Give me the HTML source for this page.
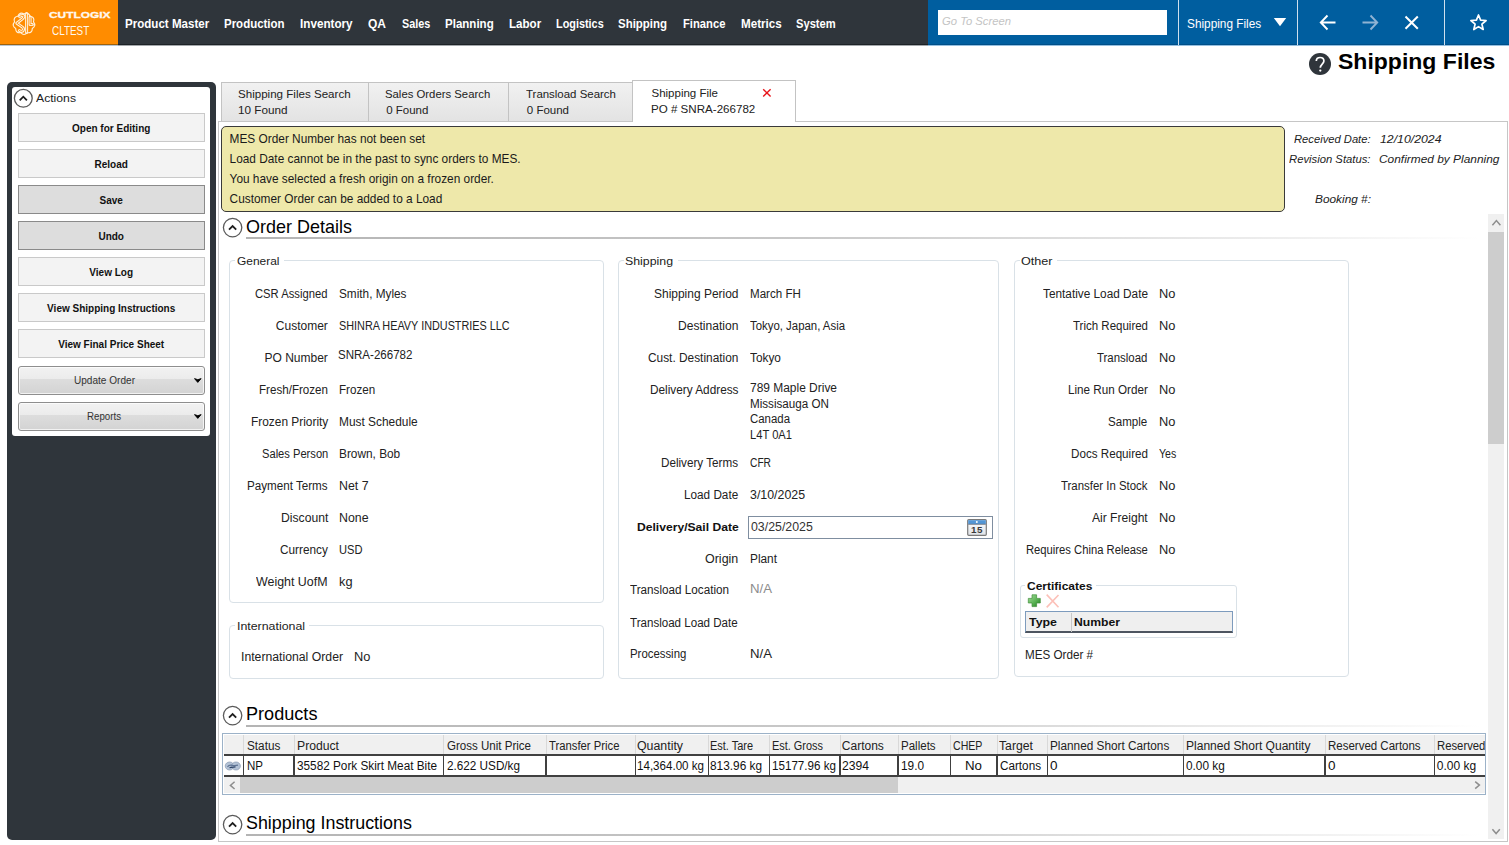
<!DOCTYPE html>
<html><head><meta charset="utf-8"><style>
html,body{margin:0;padding:0;width:1509px;height:845px;overflow:hidden;background:#fff;font-family:"Liberation Sans",sans-serif;}
body>div,body>svg{position:absolute;}
</style></head><body>
<div style="left:0px;top:0px;width:118px;height:45px;background:#ff8c00"></div>
<div style="left:0px;top:44px;width:118px;height:1px;background:#a0620c"></div>
<div style="left:0px;top:45px;width:118px;height:1px;background:#b9c6d4"></div>
<div style="left:118px;top:45px;width:810px;height:1px;background:#a4a8ac"></div>
<div style="left:928px;top:45px;width:581px;height:1px;background:#94bfe0"></div>
<div style="left:118px;top:0px;width:810px;height:45px;background:#2f353b"></div>
<div style="left:118px;top:44px;width:810px;height:1px;background:#1d2226"></div>
<div style="left:928px;top:0px;width:581px;height:45px;background:#005e9f"></div>
<div style="left:928px;top:44px;width:581px;height:1px;background:#004f88"></div>
<svg style="left:12px;top:11.5px" width="24" height="24" viewBox="0 0 24 24" fill="none" stroke="#fff1dc" stroke-width="1.15" stroke-linejoin="round" stroke-linecap="round">
<path d="M12.00 2.00 Q16.38 -0.43 18.17 4.25 Q23.09 5.20 21.45 9.93 Q24.61 13.82 20.31 16.40 Q20.23 21.41 15.28 20.62 Q12.00 24.40 8.72 20.62 Q3.77 21.41 3.69 16.40 Q-0.61 13.82 2.55 9.93 Q0.91 5.20 5.83 4.25 Q7.62 -0.43 12.00 2.00 Z"/>
<g stroke-width="3"><path d="M7.6 4.6 Q9.5 2.4 11.6 3.6 Q12.4 5 11 6.4 L4.8 11.2 L11 15.6 Q12.2 17.5 10.6 19.2 Q9 19.9 7.4 18.6"/><path d="M14.6 1.6 L14.6 20.6"/><path d="M18.1 5 L18.1 12.6 L20.4 12.6"/></g>
<g stroke="#ff8c00" stroke-width="0.9"><path d="M7.6 4.6 Q9.5 2.4 11.6 3.6 Q12.4 5 11 6.4 L4.8 11.2 L11 15.6 Q12.2 17.5 10.6 19.2 Q9 19.9 7.4 18.6"/><path d="M14.6 2.2 L14.6 20"/><path d="M18.1 5.6 L18.1 12.6 L20 12.6"/></g>
</svg>
<div style="left:48.50px;top:9.97px;font-size:8.8px;line-height:10.56px;font-weight:bold;font-style:normal;color:#fff8ee;white-space:nowrap;transform:scaleX(1.3505);transform-origin:0 0;-webkit-text-stroke:0.3px #fff8ee;">CUTLOGIX</div>
<div style="left:51.70px;top:24.36px;font-size:12.3px;line-height:14.76px;font-weight:normal;font-style:normal;color:#fff8ee;white-space:nowrap;transform:scaleX(0.8044);transform-origin:0 0;">CLTEST</div>
<div style="left:124.80px;top:16.87px;font-size:12.6px;line-height:15.12px;font-weight:bold;font-style:normal;color:#ffffff;white-space:nowrap;transform:scaleX(0.9181);transform-origin:0 0;">Product Master</div>
<div style="left:224.40px;top:16.87px;font-size:12.6px;line-height:15.12px;font-weight:bold;font-style:normal;color:#ffffff;white-space:nowrap;transform:scaleX(0.9114);transform-origin:0 0;">Production</div>
<div style="left:300.40px;top:16.87px;font-size:12.6px;line-height:15.12px;font-weight:bold;font-style:normal;color:#ffffff;white-space:nowrap;transform:scaleX(0.9276);transform-origin:0 0;">Inventory</div>
<div style="left:368.40px;top:16.87px;font-size:12.6px;line-height:15.12px;font-weight:bold;font-style:normal;color:#ffffff;white-space:nowrap;transform:scaleX(0.9524);transform-origin:0 0;">QA</div>
<div style="left:401.70px;top:16.87px;font-size:12.6px;line-height:15.12px;font-weight:bold;font-style:normal;color:#ffffff;white-space:nowrap;transform:scaleX(0.8595);transform-origin:0 0;">Sales</div>
<div style="left:444.90px;top:16.87px;font-size:12.6px;line-height:15.12px;font-weight:bold;font-style:normal;color:#ffffff;white-space:nowrap;transform:scaleX(0.9155);transform-origin:0 0;">Planning</div>
<div style="left:508.50px;top:16.87px;font-size:12.6px;line-height:15.12px;font-weight:bold;font-style:normal;color:#ffffff;white-space:nowrap;transform:scaleX(0.9200);transform-origin:0 0;">Labor</div>
<div style="left:555.60px;top:16.87px;font-size:12.6px;line-height:15.12px;font-weight:bold;font-style:normal;color:#ffffff;white-space:nowrap;transform:scaleX(0.8625);transform-origin:0 0;">Logistics</div>
<div style="left:618.20px;top:16.87px;font-size:12.6px;line-height:15.12px;font-weight:bold;font-style:normal;color:#ffffff;white-space:nowrap;transform:scaleX(0.9093);transform-origin:0 0;">Shipping</div>
<div style="left:682.80px;top:16.87px;font-size:12.6px;line-height:15.12px;font-weight:bold;font-style:normal;color:#ffffff;white-space:nowrap;transform:scaleX(0.8906);transform-origin:0 0;">Finance</div>
<div style="left:740.50px;top:16.87px;font-size:12.6px;line-height:15.12px;font-weight:bold;font-style:normal;color:#ffffff;white-space:nowrap;transform:scaleX(0.9226);transform-origin:0 0;">Metrics</div>
<div style="left:796.20px;top:16.87px;font-size:12.6px;line-height:15.12px;font-weight:bold;font-style:normal;color:#ffffff;white-space:nowrap;transform:scaleX(0.8857);transform-origin:0 0;">System</div>
<div style="left:938.4px;top:9.6px;width:228.6px;height:25.5px;background:#fff"></div>
<div style="left:942.20px;top:15.22px;font-size:11.5px;line-height:13.8px;font-weight:normal;font-style:italic;color:#c4c4c4;white-space:nowrap;transform:scaleX(0.9783);transform-origin:0 0;">Go To Screen</div>
<div style="left:1178px;top:0px;width:1.2px;height:45px;background:#cfe0ee"></div>
<div style="left:1297px;top:0px;width:1.2px;height:45px;background:#cfe0ee"></div>
<div style="left:1444.2px;top:0px;width:1.2px;height:45px;background:#cfe0ee"></div>
<div style="left:1186.80px;top:16.54px;font-size:12px;line-height:14.4px;font-weight:normal;font-style:normal;color:#ffffff;white-space:nowrap;transform:scaleX(0.9845);transform-origin:0 0;">Shipping Files</div>
<svg style="left:1273px;top:17px" width="14" height="10"><path d="M0.8 1 L13.2 1 L7 9.2 Z" fill="#fff"/></svg>
<svg style="left:1318px;top:13px" width="20" height="20" fill="none" stroke="#fff" stroke-width="1.9"><path d="M3 9.5 L17.5 9.5 M9.5 2.5 L2.8 9.5 L9.5 16.5"/></svg>
<svg style="left:1360px;top:13px" width="20" height="20" fill="none" stroke="#8fb3d3" stroke-width="1.9"><path d="M2.5 9.5 L17 9.5 M10.5 2.5 L17.2 9.5 L10.5 16.5"/></svg>
<svg style="left:1403px;top:14px" width="18" height="18" fill="none" stroke="#fff" stroke-width="2"><path d="M2.5 2.5 L14.8 14.8 M14.8 2.5 L2.5 14.8"/></svg>
<svg style="left:1468px;top:12px" width="21" height="21" fill="none" stroke="#fff" stroke-width="1.7"><path d="M10.5 3 L12.6 8.1 L18.1 8.5 L13.9 12.1 L15.2 17.5 L10.5 14.6 L5.8 17.5 L7.1 12.1 L2.9 8.5 L8.4 8.1 Z" stroke-linejoin="round"/></svg>
<div style="left:1308.6px;top:53.3px;width:22.2px;height:22.2px;border-radius:50%;background:#2f353b"></div>
<svg style="left:1308.6px;top:53.3px" width="22.2" height="22.2" fill="none" stroke="#fff" stroke-width="1.7"><path d="M7.3 8 C7.3 5.6 9 4.5 11.1 4.5 C13.4 4.5 14.9 6 14.9 8.1 C14.9 10.8 11.3 11.6 11.3 14.8"/><circle cx="11.3" cy="17.6" r="1.15" fill="#fff" stroke="none"/></svg>
<div style="left:1338.20px;top:48.86px;font-size:21.6px;line-height:25.92px;font-weight:bold;font-style:normal;color:#000;white-space:nowrap;transform:scaleX(1.0658);transform-origin:0 0;">Shipping Files</div>
<div style="left:6.7px;top:81.6px;width:209.3px;height:758.4px;background:#2f353b;border-radius:5px"></div>
<div style="left:12px;top:87px;width:198px;height:348.6px;background:#fff;border-radius:3px"></div>
<svg style="left:12.50px;top:87.70px" width="20.60" height="20.60"><circle cx="10.30" cy="10.30" r="8.90" fill="none" stroke="#5a5a5a" stroke-width="1.3"/><path d="M6.70 12.30 L10.30 8.70 L13.90 12.30" fill="none" stroke="#1e1e1e" stroke-width="1.8"/></svg>
<div style="left:35.60px;top:91.33px;font-size:11.8px;line-height:14.16px;font-weight:normal;font-style:normal;color:#222;white-space:nowrap;transform:scaleX(1.0337);transform-origin:0 0;">Actions</div>
<div style="left:17.5px;top:113.0px;width:187.5px;height:29.0px;background:#f3f3f3;border:1px solid #c9c9c9;box-sizing:border-box"></div>
<div style="left:72.04px;top:123.23px;font-size:10.0px;line-height:12.0px;font-weight:bold;font-style:normal;color:#111;white-space:nowrap;">Open for Editing</div>
<div style="left:17.5px;top:149.0px;width:187.5px;height:29.0px;background:#f3f3f3;border:1px solid #c9c9c9;box-sizing:border-box"></div>
<div style="left:94.53px;top:159.23px;font-size:10.0px;line-height:12.0px;font-weight:bold;font-style:normal;color:#111;white-space:nowrap;">Reload</div>
<div style="left:17.5px;top:185.0px;width:187.5px;height:29.0px;background:#dddddd;border:1px solid #8a8a8a;box-sizing:border-box"></div>
<div style="left:99.52px;top:195.23px;font-size:10.0px;line-height:12.0px;font-weight:bold;font-style:normal;color:#111;white-space:nowrap;">Save</div>
<div style="left:17.5px;top:221.0px;width:187.5px;height:29.0px;background:#dddddd;border:1px solid #8a8a8a;box-sizing:border-box"></div>
<div style="left:98.43px;top:231.23px;font-size:10.0px;line-height:12.0px;font-weight:bold;font-style:normal;color:#111;white-space:nowrap;">Undo</div>
<div style="left:17.5px;top:257.0px;width:187.5px;height:29.0px;background:#f3f3f3;border:1px solid #c9c9c9;box-sizing:border-box"></div>
<div style="left:89.35px;top:267.24px;font-size:10.0px;line-height:12.0px;font-weight:bold;font-style:normal;color:#111;white-space:nowrap;">View Log</div>
<div style="left:17.5px;top:293.0px;width:187.5px;height:29.0px;background:#f3f3f3;border:1px solid #c9c9c9;box-sizing:border-box"></div>
<div style="left:47.12px;top:303.24px;font-size:10.0px;line-height:12.0px;font-weight:bold;font-style:normal;color:#111;white-space:nowrap;">View Shipping Instructions</div>
<div style="left:17.5px;top:329.0px;width:187.5px;height:29.0px;background:#f3f3f3;border:1px solid #c9c9c9;box-sizing:border-box"></div>
<div style="left:58.22px;top:339.24px;font-size:10.0px;line-height:12.0px;font-weight:bold;font-style:normal;color:#111;white-space:nowrap;">View Final Price Sheet</div>
<div style="left:17.8px;top:365.5px;width:187.0px;height:29.4px;background:linear-gradient(#f2f2f2 0%,#ebebeb 46%,#dddddd 46%,#d3d3d3 100%);border:1px solid #8e8e8e;border-radius:3px;box-sizing:border-box;box-shadow:inset 0 0 0 1px rgba(255,255,255,0.7)"></div>
<div style="left:73.50px;top:374.95px;font-size:10.3px;line-height:12.36px;font-weight:normal;font-style:normal;color:#333;white-space:nowrap;transform:scaleX(0.9776);transform-origin:0 0;">Update Order</div>
<svg style="left:193.8px;top:377.8px" width="8" height="6"><path d="M0.5 0.6 L3.8 1.7 L7.1 0.6 L3.8 4.4 Z" fill="#000" stroke="#000" stroke-width="0.9" stroke-linejoin="round"/></svg>
<div style="left:17.8px;top:401.5px;width:187.0px;height:29.4px;background:linear-gradient(#f2f2f2 0%,#ebebeb 46%,#dddddd 46%,#d3d3d3 100%);border:1px solid #8e8e8e;border-radius:3px;box-sizing:border-box;box-shadow:inset 0 0 0 1px rgba(255,255,255,0.7)"></div>
<div style="left:87.00px;top:410.95px;font-size:10.3px;line-height:12.36px;font-weight:normal;font-style:normal;color:#333;white-space:nowrap;transform:scaleX(0.9428);transform-origin:0 0;">Reports</div>
<svg style="left:193.8px;top:413.8px" width="8" height="6"><path d="M0.5 0.6 L3.8 1.7 L7.1 0.6 L3.8 4.4 Z" fill="#000" stroke="#000" stroke-width="0.9" stroke-linejoin="round"/></svg>
<div style="left:218.4px;top:120.9px;width:1289.4px;height:720.9px;border:1.4px solid #c6c6c6;box-sizing:border-box;background:#fff"></div>
<div style="left:220.5px;top:81.7px;width:148.0px;height:39.3px;background:linear-gradient(#f1f1f1,#e3e3e3);border:1.3px solid #c3c3c3;border-bottom:none;box-sizing:border-box"></div>
<div style="left:367.8px;top:81.7px;width:141.0px;height:39.3px;background:linear-gradient(#f1f1f1,#e3e3e3);border:1.3px solid #c3c3c3;border-bottom:none;box-sizing:border-box"></div>
<div style="left:508px;top:81.7px;width:124.5px;height:39.3px;background:linear-gradient(#f1f1f1,#e3e3e3);border:1.3px solid #c3c3c3;border-bottom:none;box-sizing:border-box"></div>
<div style="left:631.6px;top:79.8px;width:164.4px;height:42.4px;background:#fff;border:1.3px solid #c3c3c3;border-bottom:none;box-sizing:border-box"></div>
<div style="left:237.60px;top:87.52px;font-size:11.5px;line-height:13.8px;font-weight:normal;font-style:normal;color:#222;white-space:nowrap;transform:scaleX(1.0066);transform-origin:0 0;">Shipping Files Search</div>
<div style="left:238.00px;top:103.72px;font-size:11.5px;line-height:13.8px;font-weight:normal;font-style:normal;color:#222;white-space:nowrap;transform:scaleX(1.0208);transform-origin:0 0;">10 Found</div>
<div style="left:385.00px;top:87.52px;font-size:11.5px;line-height:13.8px;font-weight:normal;font-style:normal;color:#222;white-space:nowrap;transform:scaleX(0.9856);transform-origin:0 0;">Sales Orders Search</div>
<div style="left:386.20px;top:103.72px;font-size:11.5px;line-height:13.8px;font-weight:normal;font-style:normal;color:#222;white-space:nowrap;">0 Found</div>
<div style="left:525.70px;top:87.52px;font-size:11.5px;line-height:13.8px;font-weight:normal;font-style:normal;color:#222;white-space:nowrap;transform:scaleX(0.9952);transform-origin:0 0;">Transload Search</div>
<div style="left:526.80px;top:103.72px;font-size:11.5px;line-height:13.8px;font-weight:normal;font-style:normal;color:#222;white-space:nowrap;">0 Found</div>
<div style="left:651.50px;top:87.42px;font-size:11.5px;line-height:13.8px;font-weight:normal;font-style:normal;color:#222;white-space:nowrap;">Shipping File</div>
<div style="left:650.70px;top:102.92px;font-size:11.5px;line-height:13.8px;font-weight:normal;font-style:normal;color:#222;white-space:nowrap;transform:scaleX(1.0072);transform-origin:0 0;">PO # SNRA-266782</div>
<svg style="left:762px;top:88px" width="10" height="10" fill="none" stroke="#e8141a" stroke-width="1.4"><path d="M1.2 1.2 L8.6 8.6 M8.6 1.2 L1.2 8.6"/></svg>
<div style="left:221.3px;top:125.9px;width:1063.5px;height:85.9px;background:#eee8aa;border:1.8px solid #3a3a3a;border-radius:5px;box-sizing:border-box"></div>
<div style="left:229.60px;top:131.68px;font-size:11.85px;line-height:14.22px;font-weight:normal;font-style:normal;color:#1a1a1a;white-space:nowrap;">MES Order Number has not been set</div>
<div style="left:229.60px;top:151.68px;font-size:11.85px;line-height:14.22px;font-weight:normal;font-style:normal;color:#1a1a1a;white-space:nowrap;">Load Date cannot be in the past to sync orders to MES.</div>
<div style="left:229.60px;top:171.68px;font-size:11.85px;line-height:14.22px;font-weight:normal;font-style:normal;color:#1a1a1a;white-space:nowrap;">You have selected a fresh origin on a frozen order.</div>
<div style="left:229.60px;top:191.68px;font-size:11.85px;line-height:14.22px;font-weight:normal;font-style:normal;color:#1a1a1a;white-space:nowrap;">Customer Order can be added to a Load</div>
<div style="left:1294.20px;top:132.12px;font-size:11.6px;line-height:13.92px;font-weight:normal;font-style:italic;color:#222;white-space:nowrap;transform:scaleX(0.9659);transform-origin:0 0;">Received Date:</div>
<div style="left:1379.70px;top:132.12px;font-size:11.6px;line-height:13.92px;font-weight:normal;font-style:italic;color:#222;white-space:nowrap;transform:scaleX(1.0594);transform-origin:0 0;">12/10/2024</div>
<div style="left:1289.30px;top:151.82px;font-size:11.6px;line-height:13.92px;font-weight:normal;font-style:italic;color:#222;white-space:nowrap;transform:scaleX(0.9724);transform-origin:0 0;">Revision Status:</div>
<div style="left:1379.40px;top:151.82px;font-size:11.6px;line-height:13.92px;font-weight:normal;font-style:italic;color:#222;white-space:nowrap;transform:scaleX(1.0269);transform-origin:0 0;">Confirmed by Planning</div>
<div style="left:1314.80px;top:191.72px;font-size:11.6px;line-height:13.92px;font-weight:normal;font-style:italic;color:#222;white-space:nowrap;transform:scaleX(1.0216);transform-origin:0 0;">Booking #:</div>
<svg style="left:222.20px;top:216.90px" width="21.20" height="21.20"><circle cx="10.60" cy="10.60" r="9.20" fill="none" stroke="#5a5a5a" stroke-width="1.3"/><path d="M7.00 12.60 L10.60 9.00 L14.20 12.60" fill="none" stroke="#1e1e1e" stroke-width="1.8"/></svg>
<div style="left:246.20px;top:216.55px;font-size:17.8px;line-height:21.36px;font-weight:normal;font-style:normal;color:#000;white-space:nowrap;transform:scaleX(1.0110);transform-origin:0 0;">Order Details</div>
<div style="left:246.3px;top:237.2px;width:1233.7px;height:2.0px;background:linear-gradient(90deg,#b4b4b4 0%,#c8c8c8 45%,#f4f4f4 90%,#ffffff 100%)"></div>
<svg style="left:222.20px;top:704.90px" width="21.20" height="21.20"><circle cx="10.60" cy="10.60" r="9.20" fill="none" stroke="#5a5a5a" stroke-width="1.3"/><path d="M7.00 12.60 L10.60 9.00 L14.20 12.60" fill="none" stroke="#1e1e1e" stroke-width="1.8"/></svg>
<div style="left:246.20px;top:704.15px;font-size:17.8px;line-height:21.36px;font-weight:normal;font-style:normal;color:#000;white-space:nowrap;transform:scaleX(1.0179);transform-origin:0 0;">Products</div>
<div style="left:246.3px;top:724.6px;width:1233.7px;height:2.0px;background:linear-gradient(90deg,#b4b4b4 0%,#c8c8c8 45%,#f4f4f4 90%,#ffffff 100%)"></div>
<svg style="left:222.20px;top:813.90px" width="21.20" height="21.20"><circle cx="10.60" cy="10.60" r="9.20" fill="none" stroke="#5a5a5a" stroke-width="1.3"/><path d="M7.00 12.60 L10.60 9.00 L14.20 12.60" fill="none" stroke="#1e1e1e" stroke-width="1.8"/></svg>
<div style="left:246.20px;top:813.15px;font-size:17.8px;line-height:21.36px;font-weight:normal;font-style:normal;color:#000;white-space:nowrap;transform:scaleX(1.0047);transform-origin:0 0;">Shipping Instructions</div>
<div style="left:246.3px;top:834px;width:1233.7px;height:2px;background:linear-gradient(90deg,#b4b4b4 0%,#c8c8c8 45%,#f4f4f4 90%,#ffffff 100%)"></div>
<div style="left:229.2px;top:259.9px;width:374.6px;height:342.7px;border:1.4px solid #d9e1e7;border-radius:4px;box-sizing:border-box"></div>
<div style="left:235px;top:257.7px;width:48.6px;height:6.0px;background:#fff"></div>
<div style="left:236.50px;top:255.02px;font-size:11.5px;line-height:13.8px;font-weight:normal;font-style:normal;color:#222;white-space:nowrap;transform:scaleX(1.0389);transform-origin:0 0;">General</div>
<div style="left:229.2px;top:624.6px;width:374.6px;height:54.2px;border:1.4px solid #d9e1e7;border-radius:4px;box-sizing:border-box"></div>
<div style="left:235px;top:622.4px;width:74.1px;height:6.0px;background:#fff"></div>
<div style="left:236.50px;top:619.72px;font-size:11.5px;line-height:13.8px;font-weight:normal;font-style:normal;color:#222;white-space:nowrap;transform:scaleX(1.0744);transform-origin:0 0;">International</div>
<div style="left:617.7px;top:259.9px;width:381.5px;height:418.7px;border:1.4px solid #d9e1e7;border-radius:4px;box-sizing:border-box"></div>
<div style="left:623.5px;top:257.7px;width:54.1px;height:6.0px;background:#fff"></div>
<div style="left:625.00px;top:255.02px;font-size:11.5px;line-height:13.8px;font-weight:normal;font-style:normal;color:#222;white-space:nowrap;transform:scaleX(1.0725);transform-origin:0 0;">Shipping</div>
<div style="left:1013.7px;top:259.9px;width:335.5px;height:416.7px;border:1.4px solid #d9e1e7;border-radius:4px;box-sizing:border-box"></div>
<div style="left:1019.5px;top:257.7px;width:37.6px;height:6.0px;background:#fff"></div>
<div style="left:1021.00px;top:255.02px;font-size:11.5px;line-height:13.8px;font-weight:normal;font-style:normal;color:#222;white-space:nowrap;transform:scaleX(1.0953);transform-origin:0 0;">Other</div>
<div style="left:255.30px;top:286.74px;font-size:12.0px;line-height:14.4px;font-weight:normal;font-style:normal;color:#222;white-space:nowrap;transform:scaleX(0.9370);transform-origin:0 0;">CSR Assigned</div>
<div style="left:338.70px;top:286.74px;font-size:12.0px;line-height:14.4px;font-weight:normal;font-style:normal;color:#222;white-space:nowrap;transform:scaleX(0.9829);transform-origin:0 0;">Smith, Myles</div>
<div style="left:275.80px;top:318.74px;font-size:12.0px;line-height:14.4px;font-weight:normal;font-style:normal;color:#222;white-space:nowrap;">Customer</div>
<div style="left:338.70px;top:318.74px;font-size:12.0px;line-height:14.4px;font-weight:normal;font-style:normal;color:#222;white-space:nowrap;transform:scaleX(0.9034);transform-origin:0 0;">SHINRA HEAVY INDUSTRIES LLC</div>
<div style="left:264.50px;top:350.74px;font-size:12.0px;line-height:14.4px;font-weight:normal;font-style:normal;color:#222;white-space:nowrap;">PO Number</div>
<div style="left:337.80px;top:347.74px;font-size:12.0px;line-height:14.4px;font-weight:normal;font-style:normal;color:#222;white-space:nowrap;transform:scaleX(0.9615);transform-origin:0 0;">SNRA-266782</div>
<div style="left:258.80px;top:382.74px;font-size:12.0px;line-height:14.4px;font-weight:normal;font-style:normal;color:#222;white-space:nowrap;transform:scaleX(0.9671);transform-origin:0 0;">Fresh/Frozen</div>
<div style="left:338.70px;top:382.74px;font-size:12.0px;line-height:14.4px;font-weight:normal;font-style:normal;color:#222;white-space:nowrap;transform:scaleX(0.9694);transform-origin:0 0;">Frozen</div>
<div style="left:250.50px;top:414.74px;font-size:12.0px;line-height:14.4px;font-weight:normal;font-style:normal;color:#222;white-space:nowrap;transform:scaleX(0.9909);transform-origin:0 0;">Frozen Priority</div>
<div style="left:338.70px;top:414.74px;font-size:12.0px;line-height:14.4px;font-weight:normal;font-style:normal;color:#222;white-space:nowrap;transform:scaleX(0.9915);transform-origin:0 0;">Must Schedule</div>
<div style="left:261.50px;top:446.74px;font-size:12.0px;line-height:14.4px;font-weight:normal;font-style:normal;color:#222;white-space:nowrap;transform:scaleX(0.9290);transform-origin:0 0;">Sales Person</div>
<div style="left:338.70px;top:446.74px;font-size:12.0px;line-height:14.4px;font-weight:normal;font-style:normal;color:#222;white-space:nowrap;transform:scaleX(0.9866);transform-origin:0 0;">Brown, Bob</div>
<div style="left:247.20px;top:478.74px;font-size:12.0px;line-height:14.4px;font-weight:normal;font-style:normal;color:#222;white-space:nowrap;transform:scaleX(0.9695);transform-origin:0 0;">Payment Terms</div>
<div style="left:338.70px;top:478.74px;font-size:12.0px;line-height:14.4px;font-weight:normal;font-style:normal;color:#222;white-space:nowrap;transform:scaleX(1.0286);transform-origin:0 0;">Net 7</div>
<div style="left:280.50px;top:510.74px;font-size:12.0px;line-height:14.4px;font-weight:normal;font-style:normal;color:#222;white-space:nowrap;transform:scaleX(1.0132);transform-origin:0 0;">Discount</div>
<div style="left:338.70px;top:510.74px;font-size:12.0px;line-height:14.4px;font-weight:normal;font-style:normal;color:#222;white-space:nowrap;transform:scaleX(1.0284);transform-origin:0 0;">None</div>
<div style="left:280.00px;top:542.74px;font-size:12.0px;line-height:14.4px;font-weight:normal;font-style:normal;color:#222;white-space:nowrap;transform:scaleX(0.9820);transform-origin:0 0;">Currency</div>
<div style="left:338.70px;top:542.74px;font-size:12.0px;line-height:14.4px;font-weight:normal;font-style:normal;color:#222;white-space:nowrap;transform:scaleX(0.9275);transform-origin:0 0;">USD</div>
<div style="left:256.30px;top:574.74px;font-size:12.0px;line-height:14.4px;font-weight:normal;font-style:normal;color:#222;white-space:nowrap;transform:scaleX(1.0343);transform-origin:0 0;">Weight UofM</div>
<div style="left:338.70px;top:574.74px;font-size:12.0px;line-height:14.4px;font-weight:normal;font-style:normal;color:#222;white-space:nowrap;transform:scaleX(1.0652);transform-origin:0 0;">kg</div>
<div style="left:240.80px;top:650.24px;font-size:12.0px;line-height:14.4px;font-weight:normal;font-style:normal;color:#222;white-space:nowrap;transform:scaleX(1.0195);transform-origin:0 0;">International Order</div>
<div style="left:353.80px;top:650.24px;font-size:12.0px;line-height:14.4px;font-weight:normal;font-style:normal;color:#222;white-space:nowrap;transform:scaleX(1.0691);transform-origin:0 0;">No</div>
<div style="left:653.90px;top:287.24px;font-size:12.0px;line-height:14.4px;font-weight:normal;font-style:normal;color:#222;white-space:nowrap;transform:scaleX(0.9974);transform-origin:0 0;">Shipping Period</div>
<div style="left:749.70px;top:287.24px;font-size:12.0px;line-height:14.4px;font-weight:normal;font-style:normal;color:#222;white-space:nowrap;transform:scaleX(0.9646);transform-origin:0 0;">March FH</div>
<div style="left:678.00px;top:318.74px;font-size:12.0px;line-height:14.4px;font-weight:normal;font-style:normal;color:#222;white-space:nowrap;transform:scaleX(1.0061);transform-origin:0 0;">Destination</div>
<div style="left:749.70px;top:318.74px;font-size:12.0px;line-height:14.4px;font-weight:normal;font-style:normal;color:#222;white-space:nowrap;transform:scaleX(0.9495);transform-origin:0 0;">Tokyo, Japan, Asia</div>
<div style="left:648.00px;top:350.74px;font-size:12.0px;line-height:14.4px;font-weight:normal;font-style:normal;color:#222;white-space:nowrap;transform:scaleX(0.9894);transform-origin:0 0;">Cust. Destination</div>
<div style="left:749.70px;top:350.74px;font-size:12.0px;line-height:14.4px;font-weight:normal;font-style:normal;color:#222;white-space:nowrap;transform:scaleX(0.9858);transform-origin:0 0;">Tokyo</div>
<div style="left:649.90px;top:383.04px;font-size:12.0px;line-height:14.4px;font-weight:normal;font-style:normal;color:#222;white-space:nowrap;transform:scaleX(0.9830);transform-origin:0 0;">Delivery Address</div>
<div style="left:749.70px;top:381.14px;font-size:12.0px;line-height:14.4px;font-weight:normal;font-style:normal;color:#222;white-space:nowrap;transform:scaleX(0.9958);transform-origin:0 0;">789 Maple Drive</div>
<div style="left:661.40px;top:455.54px;font-size:12.0px;line-height:14.4px;font-weight:normal;font-style:normal;color:#222;white-space:nowrap;transform:scaleX(0.9732);transform-origin:0 0;">Delivery Terms</div>
<div style="left:749.70px;top:455.54px;font-size:12.0px;line-height:14.4px;font-weight:normal;font-style:normal;color:#222;white-space:nowrap;transform:scaleX(0.8515);transform-origin:0 0;">CFR</div>
<div style="left:684.20px;top:487.54px;font-size:12.0px;line-height:14.4px;font-weight:normal;font-style:normal;color:#222;white-space:nowrap;transform:scaleX(0.9788);transform-origin:0 0;">Load Date</div>
<div style="left:749.70px;top:487.54px;font-size:12.0px;line-height:14.4px;font-weight:normal;font-style:normal;color:#222;white-space:nowrap;transform:scaleX(1.0304);transform-origin:0 0;">3/10/2025</div>
<div style="left:749.70px;top:396.54px;font-size:12.0px;line-height:14.4px;font-weight:normal;font-style:normal;color:#222;white-space:nowrap;transform:scaleX(0.9711);transform-origin:0 0;">Missisauga ON</div>
<div style="left:749.70px;top:412.14px;font-size:12.0px;line-height:14.4px;font-weight:normal;font-style:normal;color:#222;white-space:nowrap;transform:scaleX(0.9517);transform-origin:0 0;">Canada</div>
<div style="left:749.70px;top:427.54px;font-size:12.0px;line-height:14.4px;font-weight:normal;font-style:normal;color:#222;white-space:nowrap;transform:scaleX(0.9304);transform-origin:0 0;">L4T 0A1</div>
<div style="left:636.70px;top:520.52px;font-size:11.5px;line-height:13.8px;font-weight:bold;font-style:normal;color:#111;white-space:nowrap;transform:scaleX(1.0537);transform-origin:0 0;">Delivery/Sail Date</div>
<div style="left:747.5px;top:516.3px;width:245.1px;height:22.3px;background:#fff;border:1.2px solid #7f8ea0;box-sizing:border-box"></div>
<div style="left:751.40px;top:520.14px;font-size:12.0px;line-height:14.4px;font-weight:normal;font-style:normal;color:#333;white-space:nowrap;transform:scaleX(1.0291);transform-origin:0 0;">03/25/2025</div>
<svg style="left:967px;top:519px" width="20" height="17">
<defs><linearGradient id="cg" x1="0" y1="0" x2="0" y2="1"><stop offset="0" stop-color="#ffffff"/><stop offset="1" stop-color="#dfe3e8"/></linearGradient></defs>
<rect x="0.7" y="0.7" width="18.6" height="15.6" rx="1" fill="url(#cg)" stroke="#7a7a7a" stroke-width="1.2"/>
<rect x="1.2" y="1.2" width="17.6" height="3.8" fill="#5296d6"/>
<rect x="1.2" y="4.8" width="17.6" height="0.9" fill="#6a7380"/>
<circle cx="9.8" cy="2.9" r="1" fill="#fff"/>
<text x="10" y="14.3" font-family="Liberation Sans" font-size="9.8" font-weight="bold" text-anchor="middle" fill="#3a3a3a" letter-spacing="0.6">15</text></svg>
<div style="left:705.10px;top:551.74px;font-size:12.0px;line-height:14.4px;font-weight:normal;font-style:normal;color:#222;white-space:nowrap;transform:scaleX(1.0404);transform-origin:0 0;">Origin</div>
<div style="left:749.70px;top:551.74px;font-size:12.0px;line-height:14.4px;font-weight:normal;font-style:normal;color:#222;white-space:nowrap;transform:scaleX(0.9872);transform-origin:0 0;">Plant</div>
<div style="left:630.20px;top:582.54px;font-size:12.0px;line-height:14.4px;font-weight:normal;font-style:normal;color:#222;white-space:nowrap;transform:scaleX(0.9743);transform-origin:0 0;">Transload Location</div>
<div style="left:749.80px;top:581.74px;font-size:12.0px;line-height:14.4px;font-weight:normal;font-style:normal;color:#8c8c8c;white-space:nowrap;transform:scaleX(1.0998);transform-origin:0 0;">N/A</div>
<div style="left:630.20px;top:615.54px;font-size:12.0px;line-height:14.4px;font-weight:normal;font-style:normal;color:#222;white-space:nowrap;transform:scaleX(0.9649);transform-origin:0 0;">Transload Load Date</div>
<div style="left:630.20px;top:647.24px;font-size:12.0px;line-height:14.4px;font-weight:normal;font-style:normal;color:#222;white-space:nowrap;transform:scaleX(0.9485);transform-origin:0 0;">Processing</div>
<div style="left:749.80px;top:647.24px;font-size:12.0px;line-height:14.4px;font-weight:normal;font-style:normal;color:#222;white-space:nowrap;transform:scaleX(1.0998);transform-origin:0 0;">N/A</div>
<div style="left:1042.60px;top:286.74px;font-size:12.0px;line-height:14.4px;font-weight:normal;font-style:normal;color:#222;white-space:nowrap;transform:scaleX(0.9838);transform-origin:0 0;">Tentative Load Date</div>
<div style="left:1159.20px;top:286.74px;font-size:12.0px;line-height:14.4px;font-weight:normal;font-style:normal;color:#222;white-space:nowrap;transform:scaleX(1.0691);transform-origin:0 0;">No</div>
<div style="left:1072.60px;top:318.74px;font-size:12.0px;line-height:14.4px;font-weight:normal;font-style:normal;color:#222;white-space:nowrap;transform:scaleX(0.9585);transform-origin:0 0;">Trich Required</div>
<div style="left:1159.20px;top:318.74px;font-size:12.0px;line-height:14.4px;font-weight:normal;font-style:normal;color:#222;white-space:nowrap;transform:scaleX(1.0691);transform-origin:0 0;">No</div>
<div style="left:1097.20px;top:350.74px;font-size:12.0px;line-height:14.4px;font-weight:normal;font-style:normal;color:#222;white-space:nowrap;transform:scaleX(0.9525);transform-origin:0 0;">Transload</div>
<div style="left:1159.20px;top:350.74px;font-size:12.0px;line-height:14.4px;font-weight:normal;font-style:normal;color:#222;white-space:nowrap;transform:scaleX(1.0691);transform-origin:0 0;">No</div>
<div style="left:1067.80px;top:382.74px;font-size:12.0px;line-height:14.4px;font-weight:normal;font-style:normal;color:#222;white-space:nowrap;transform:scaleX(0.9727);transform-origin:0 0;">Line Run Order</div>
<div style="left:1159.20px;top:382.74px;font-size:12.0px;line-height:14.4px;font-weight:normal;font-style:normal;color:#222;white-space:nowrap;transform:scaleX(1.0691);transform-origin:0 0;">No</div>
<div style="left:1108.40px;top:414.74px;font-size:12.0px;line-height:14.4px;font-weight:normal;font-style:normal;color:#222;white-space:nowrap;transform:scaleX(0.9635);transform-origin:0 0;">Sample</div>
<div style="left:1159.20px;top:414.74px;font-size:12.0px;line-height:14.4px;font-weight:normal;font-style:normal;color:#222;white-space:nowrap;transform:scaleX(1.0691);transform-origin:0 0;">No</div>
<div style="left:1070.60px;top:446.74px;font-size:12.0px;line-height:14.4px;font-weight:normal;font-style:normal;color:#222;white-space:nowrap;transform:scaleX(0.9702);transform-origin:0 0;">Docs Required</div>
<div style="left:1159.20px;top:446.74px;font-size:12.0px;line-height:14.4px;font-weight:normal;font-style:normal;color:#222;white-space:nowrap;transform:scaleX(0.8837);transform-origin:0 0;">Yes</div>
<div style="left:1061.10px;top:478.74px;font-size:12.0px;line-height:14.4px;font-weight:normal;font-style:normal;color:#222;white-space:nowrap;transform:scaleX(0.9514);transform-origin:0 0;">Transfer In Stock</div>
<div style="left:1159.20px;top:478.74px;font-size:12.0px;line-height:14.4px;font-weight:normal;font-style:normal;color:#222;white-space:nowrap;transform:scaleX(1.0691);transform-origin:0 0;">No</div>
<div style="left:1091.90px;top:510.74px;font-size:12.0px;line-height:14.4px;font-weight:normal;font-style:normal;color:#222;white-space:nowrap;transform:scaleX(1.0064);transform-origin:0 0;">Air Freight</div>
<div style="left:1159.20px;top:510.74px;font-size:12.0px;line-height:14.4px;font-weight:normal;font-style:normal;color:#222;white-space:nowrap;transform:scaleX(1.0691);transform-origin:0 0;">No</div>
<div style="left:1025.80px;top:542.74px;font-size:12.0px;line-height:14.4px;font-weight:normal;font-style:normal;color:#222;white-space:nowrap;transform:scaleX(0.9365);transform-origin:0 0;">Requires China Release</div>
<div style="left:1159.20px;top:542.74px;font-size:12.0px;line-height:14.4px;font-weight:normal;font-style:normal;color:#222;white-space:nowrap;transform:scaleX(1.0691);transform-origin:0 0;">No</div>
<div style="left:1019.8px;top:585px;width:217.2px;height:52.8px;border:1.2px solid #d9e1e7;border-radius:3px;box-sizing:border-box"></div>
<div style="left:1025px;top:580px;width:71px;height:10px;background:#fff"></div>
<div style="left:1026.90px;top:579.72px;font-size:11.5px;line-height:13.8px;font-weight:bold;font-style:normal;color:#111;white-space:nowrap;transform:scaleX(1.0426);transform-origin:0 0;">Certificates</div>
<svg style="left:1027px;top:594px" width="15" height="15"><defs><linearGradient id="pg" x1="0" y1="0" x2="1" y2="1"><stop offset="0" stop-color="#a6dc9c"/><stop offset="0.55" stop-color="#5cb456"/><stop offset="1" stop-color="#1f7a1f"/></linearGradient></defs><path d="M5 0.8 H9.6 V4.4 H13.3 V9 H9.6 V12.6 H5 V9 H1.3 V4.4 H5 Z" fill="url(#pg)" stroke="#3f8f3a" stroke-width="0.7"/></svg>
<svg style="left:1045px;top:593px" width="15" height="16" fill="none" stroke="#fcc0b8" stroke-width="1.6"><path d="M1.7 1.6 L13.5 14.3 M13.5 2 L1.7 14.4"/></svg>
<div style="left:1025.2px;top:611.4px;width:207.6px;height:22.0px;background:#efefef;border:1.3px solid #7d9bbd;border-bottom:2.2px solid #4d5560;box-sizing:border-box"></div>
<div style="left:1070.5px;top:612.5px;width:1.0px;height:19.0px;background:#c8c8c8"></div>
<div style="left:1029.00px;top:615.92px;font-size:11.5px;line-height:13.8px;font-weight:bold;font-style:normal;color:#111;white-space:nowrap;transform:scaleX(1.0776);transform-origin:0 0;">Type</div>
<div style="left:1073.70px;top:615.92px;font-size:11.5px;line-height:13.8px;font-weight:bold;font-style:normal;color:#111;white-space:nowrap;transform:scaleX(1.0587);transform-origin:0 0;">Number</div>
<div style="left:1025.20px;top:648.24px;font-size:12.0px;line-height:14.4px;font-weight:normal;font-style:normal;color:#222;white-space:nowrap;transform:scaleX(0.9712);transform-origin:0 0;">MES Order #</div>
<div style="left:222.4px;top:733px;width:1264.0px;height:61.6px;border:1.8px solid #9cb2c8;box-sizing:border-box;background:#fff"></div>
<div style="left:224px;top:734.5px;width:1260.8px;height:20.5px;background:#f0f0f0"></div>
<div style="left:243.3px;top:735px;width:1.0px;height:20px;background:#d9d9d9"></div>
<div style="left:293.8px;top:735px;width:1.0px;height:20px;background:#d9d9d9"></div>
<div style="left:443.3px;top:735px;width:1.0px;height:20px;background:#d9d9d9"></div>
<div style="left:545.8px;top:735px;width:1.0px;height:20px;background:#d9d9d9"></div>
<div style="left:635.0px;top:735px;width:1.0px;height:20px;background:#d9d9d9"></div>
<div style="left:708.2px;top:735px;width:1.0px;height:20px;background:#d9d9d9"></div>
<div style="left:769.4px;top:735px;width:1.0px;height:20px;background:#d9d9d9"></div>
<div style="left:839.6px;top:735px;width:1.0px;height:20px;background:#d9d9d9"></div>
<div style="left:897.8px;top:735px;width:1.0px;height:20px;background:#d9d9d9"></div>
<div style="left:950.3px;top:735px;width:1.0px;height:20px;background:#d9d9d9"></div>
<div style="left:996.8px;top:735px;width:1.0px;height:20px;background:#d9d9d9"></div>
<div style="left:1047.0px;top:735px;width:1.0px;height:20px;background:#d9d9d9"></div>
<div style="left:1183.4px;top:735px;width:1.0px;height:20px;background:#d9d9d9"></div>
<div style="left:1324.5px;top:735px;width:1.0px;height:20px;background:#d9d9d9"></div>
<div style="left:1434.2px;top:735px;width:1.0px;height:20px;background:#d9d9d9"></div>
<div style="left:246.60px;top:738.74px;font-size:12.0px;line-height:14.4px;font-weight:normal;font-style:normal;color:#222;white-space:nowrap;transform:scaleX(0.9789);transform-origin:0 0;">Status</div>
<div style="left:296.90px;top:738.74px;font-size:12.0px;line-height:14.4px;font-weight:normal;font-style:normal;color:#222;white-space:nowrap;transform:scaleX(1.0156);transform-origin:0 0;">Product</div>
<div style="left:446.80px;top:738.74px;font-size:12.0px;line-height:14.4px;font-weight:normal;font-style:normal;color:#222;white-space:nowrap;transform:scaleX(0.9617);transform-origin:0 0;">Gross Unit Price</div>
<div style="left:548.90px;top:738.74px;font-size:12.0px;line-height:14.4px;font-weight:normal;font-style:normal;color:#222;white-space:nowrap;transform:scaleX(0.9399);transform-origin:0 0;">Transfer Price</div>
<div style="left:637.20px;top:738.74px;font-size:12.0px;line-height:14.4px;font-weight:normal;font-style:normal;color:#222;white-space:nowrap;transform:scaleX(1.0294);transform-origin:0 0;">Quantity</div>
<div style="left:710.40px;top:738.74px;font-size:12.0px;line-height:14.4px;font-weight:normal;font-style:normal;color:#222;white-space:nowrap;transform:scaleX(0.9124);transform-origin:0 0;">Est. Tare</div>
<div style="left:771.60px;top:738.74px;font-size:12.0px;line-height:14.4px;font-weight:normal;font-style:normal;color:#222;white-space:nowrap;transform:scaleX(0.9106);transform-origin:0 0;">Est. Gross</div>
<div style="left:841.80px;top:738.74px;font-size:12.0px;line-height:14.4px;font-weight:normal;font-style:normal;color:#222;white-space:nowrap;">Cartons</div>
<div style="left:900.90px;top:738.74px;font-size:12.0px;line-height:14.4px;font-weight:normal;font-style:normal;color:#222;white-space:nowrap;transform:scaleX(0.9607);transform-origin:0 0;">Pallets</div>
<div style="left:952.50px;top:738.74px;font-size:12.0px;line-height:14.4px;font-weight:normal;font-style:normal;color:#222;white-space:nowrap;transform:scaleX(0.8818);transform-origin:0 0;">CHEP</div>
<div style="left:999.00px;top:738.74px;font-size:12.0px;line-height:14.4px;font-weight:normal;font-style:normal;color:#222;white-space:nowrap;transform:scaleX(1.0195);transform-origin:0 0;">Target</div>
<div style="left:1049.70px;top:738.74px;font-size:12.0px;line-height:14.4px;font-weight:normal;font-style:normal;color:#222;white-space:nowrap;transform:scaleX(0.9827);transform-origin:0 0;">Planned Short Cartons</div>
<div style="left:1186.10px;top:738.74px;font-size:12.0px;line-height:14.4px;font-weight:normal;font-style:normal;color:#222;white-space:nowrap;transform:scaleX(1.0027);transform-origin:0 0;">Planned Short Quantity</div>
<div style="left:1327.60px;top:738.74px;font-size:12.0px;line-height:14.4px;font-weight:normal;font-style:normal;color:#222;white-space:nowrap;transform:scaleX(0.9576);transform-origin:0 0;">Reserved Cartons</div>
<div style="left:1436.80px;top:738.74px;font-size:12.0px;line-height:14.4px;font-weight:normal;font-style:normal;color:#222;white-space:nowrap;transform:scaleX(0.9425);transform-origin:0 0;">Reserved</div>
<div style="left:224px;top:754.3px;width:1260.8px;height:1.6px;background:#404040"></div>
<div style="left:224px;top:775.1px;width:1260.8px;height:1.6px;background:#404040"></div>
<div style="left:242.8px;top:755px;width:1.5px;height:21px;background:#404040"></div>
<div style="left:293.3px;top:755px;width:1.5px;height:21px;background:#404040"></div>
<div style="left:442.8px;top:755px;width:1.5px;height:21px;background:#404040"></div>
<div style="left:545.3px;top:755px;width:1.5px;height:21px;background:#404040"></div>
<div style="left:634.5px;top:755px;width:1.5px;height:21px;background:#404040"></div>
<div style="left:707.7px;top:755px;width:1.5px;height:21px;background:#404040"></div>
<div style="left:768.9px;top:755px;width:1.5px;height:21px;background:#404040"></div>
<div style="left:839.1px;top:755px;width:1.5px;height:21px;background:#404040"></div>
<div style="left:897.3px;top:755px;width:1.5px;height:21px;background:#404040"></div>
<div style="left:949.8px;top:755px;width:1.5px;height:21px;background:#404040"></div>
<div style="left:996.3px;top:755px;width:1.5px;height:21px;background:#404040"></div>
<div style="left:1046.5px;top:755px;width:1.5px;height:21px;background:#404040"></div>
<div style="left:1182.9px;top:755px;width:1.5px;height:21px;background:#404040"></div>
<div style="left:1324.0px;top:755px;width:1.5px;height:21px;background:#404040"></div>
<div style="left:1433.7px;top:755px;width:1.5px;height:21px;background:#404040"></div>
<div style="left:246.60px;top:758.94px;font-size:12.0px;line-height:14.4px;font-weight:normal;font-style:normal;color:#111;white-space:nowrap;transform:scaleX(0.9598);transform-origin:0 0;">NP</div>
<div style="left:296.90px;top:758.94px;font-size:12.0px;line-height:14.4px;font-weight:normal;font-style:normal;color:#111;white-space:nowrap;transform:scaleX(0.9809);transform-origin:0 0;">35582 Pork Skirt Meat Bite</div>
<div style="left:446.80px;top:758.94px;font-size:12.0px;line-height:14.4px;font-weight:normal;font-style:normal;color:#111;white-space:nowrap;transform:scaleX(0.9772);transform-origin:0 0;">2.622 USD/kg</div>
<div style="left:637.20px;top:758.94px;font-size:12.0px;line-height:14.4px;font-weight:normal;font-style:normal;color:#111;white-space:nowrap;transform:scaleX(0.9656);transform-origin:0 0;">14,364.00 kg</div>
<div style="left:710.40px;top:758.94px;font-size:12.0px;line-height:14.4px;font-weight:normal;font-style:normal;color:#111;white-space:nowrap;transform:scaleX(0.9866);transform-origin:0 0;">813.96 kg</div>
<div style="left:771.60px;top:758.94px;font-size:12.0px;line-height:14.4px;font-weight:normal;font-style:normal;color:#111;white-space:nowrap;transform:scaleX(0.9689);transform-origin:0 0;">15177.96 kg</div>
<div style="left:841.80px;top:758.94px;font-size:12.0px;line-height:14.4px;font-weight:normal;font-style:normal;color:#111;white-space:nowrap;transform:scaleX(1.0115);transform-origin:0 0;">2394</div>
<div style="left:900.90px;top:758.94px;font-size:12.0px;line-height:14.4px;font-weight:normal;font-style:normal;color:#111;white-space:nowrap;transform:scaleX(0.9849);transform-origin:0 0;">19.0</div>
<div style="left:1000.00px;top:758.94px;font-size:12.0px;line-height:14.4px;font-weight:normal;font-style:normal;color:#111;white-space:nowrap;transform:scaleX(0.9758);transform-origin:0 0;">Cartons</div>
<div style="left:1049.70px;top:758.94px;font-size:12.0px;line-height:14.4px;font-weight:normal;font-style:normal;color:#111;white-space:nowrap;transform:scaleX(1.1239);transform-origin:0 0;">0</div>
<div style="left:1186.10px;top:758.94px;font-size:12.0px;line-height:14.4px;font-weight:normal;font-style:normal;color:#111;white-space:nowrap;transform:scaleX(0.9858);transform-origin:0 0;">0.00 kg</div>
<div style="left:1327.60px;top:758.94px;font-size:12.0px;line-height:14.4px;font-weight:normal;font-style:normal;color:#111;white-space:nowrap;transform:scaleX(1.1239);transform-origin:0 0;">0</div>
<div style="left:1436.80px;top:758.94px;font-size:12.0px;line-height:14.4px;font-weight:normal;font-style:normal;color:#111;white-space:nowrap;">0.00 kg</div>
<div style="left:964.60px;top:758.94px;font-size:12.0px;line-height:14.4px;font-weight:normal;font-style:normal;color:#111;white-space:nowrap;transform:scaleX(1.1083);transform-origin:0 0;">No</div>
<svg style="left:224px;top:760px" width="18" height="12"><ellipse cx="5.6" cy="6" rx="4.4" ry="4" fill="#b3c2d6" stroke="#8798b0" stroke-width="0.7"/><ellipse cx="12" cy="6" rx="4.4" ry="4" fill="#b3c2d6" stroke="#8798b0" stroke-width="0.7"/><path d="M3.5 6.8 Q5 4.6 8.8 5.4 Q11 5.8 14 5.2" fill="none" stroke="#5f7494" stroke-width="1.2"/><path d="M5.5 7.6 L11.5 6.8" stroke="#2f4468" stroke-width="1.3"/></svg>
<div style="left:1484.6px;top:733px;width:3.0px;height:61.6px;background:#fff"></div>
<div style="left:1484.6px;top:733px;width:1.8px;height:61.6px;background:#9cb2c8"></div>
<div style="left:224px;top:777px;width:1260.8px;height:16px;background:#f0f0f0"></div>
<div style="left:240.4px;top:777px;width:657.4px;height:16px;background:#cdcdcd"></div>
<div style="left:1487.6px;top:214.4px;width:16.9px;height:624.8px;background:#f0f0f0"></div>
<div style="left:1487.6px;top:231.6px;width:16.9px;height:212.1px;background:#cdcdcd"></div>
<svg style="left:0;top:0" width="1509" height="845" fill="none" stroke="#8e8e8e" stroke-width="1.5"><path d="M234.6 781.8 L230.4 785.4 L234.6 789"/><path d="M1475.2 781.6 L1479.4 785.1 L1475.2 788.6"/><path d="M1492.4 225.2 L1496.4 220.6 L1500.4 225.2"/><path d="M1492.4 829.2 L1496.1 833.6 L1499.8 829.2"/></svg>
</body></html>
